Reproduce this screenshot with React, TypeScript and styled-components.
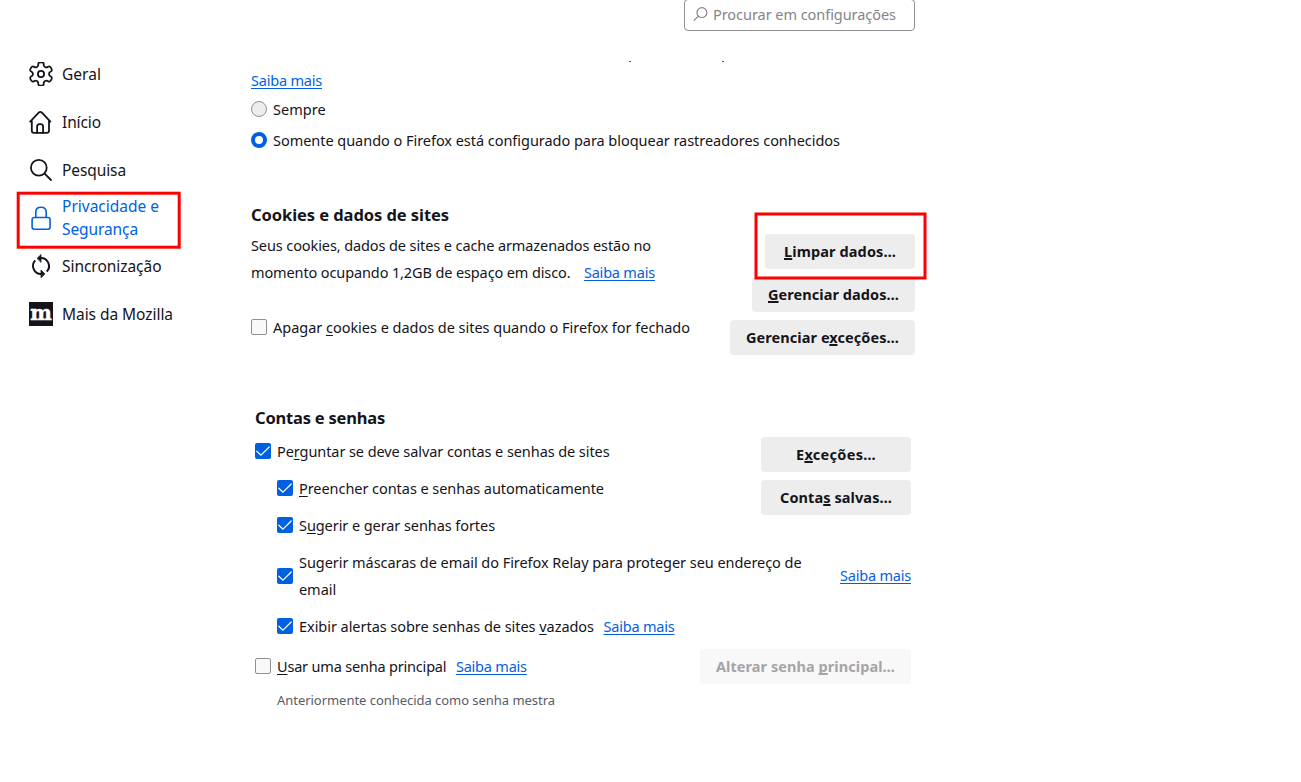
import React from "react";
import styled, { createGlobalStyle } from "styled-components";

const ink = "#15141a";
const blue = "#0061e0";

const GlobalStyle = createGlobalStyle`
  *, *::before, *::after { box-sizing: border-box; }
  body {
    margin: 0;
    background: #fff;
    color: ${ink};
    font-family: "Noto Sans", "Liberation Sans", sans-serif;
    font-size: 14.5px;
    overflow: hidden;
  }
`;

const Page = styled.div`
  display: flex;
  height: 782px;
  overflow: hidden;
`;

const Sidebar = styled.nav`
  width: 251px;
  flex: none;
  padding: 50px 66px 0 29px;
`;

const NavItem = styled.a<{ $active?: boolean }>`
  position: relative;
  display: flex;
  align-items: center;
  gap: 9px;
  height: 48px;
  font-size: 15.5px;
  line-height: 23px;
  color: ${(p) => (p.$active ? blue : ink)};
  white-space: nowrap;

  > svg:first-child { flex: none; }
`;

const Tracked = styled.span<{ $track: number }>`
  letter-spacing: ${(p) => p.$track}px;
`;

const Callout = styled.svg<{ $left: number; $top: number }>`
  position: absolute;
  z-index: 2;
  left: ${(p) => p.$left}px;
  top: ${(p) => p.$top}px;
  pointer-events: none;
`;

const Main = styled.main`
  width: 664px;
  display: flex;
  flex-direction: column;
`;

const SearchBox = styled.div`
  align-self: flex-end;
  display: flex;
  align-items: center;
  gap: 5px;
  width: 231px;
  height: 32px;
  margin-top: -1px;
  padding: 0 0 2px 8px;
  border: 1px solid #8f8f94;
  border-radius: 4px;
  color: #84848a;
  letter-spacing: -0.051px;
`;

const ClippedLine = styled.div`
  display: flex;
  gap: 91px;
  height: 6px;
  margin-top: 30px;
  padding-left: 378px;
`;

const Descender = styled.i`
  width: 2px;
  height: 1px;
  background: #55545a;
`;

const Link = styled.a<{ $gap?: number }>`
  margin-left: ${(p) => p.$gap ?? 0}px;
  color: ${blue};
  letter-spacing: -0.205px;
  text-decoration: underline;
  text-decoration-thickness: 1px;
  text-underline-offset: 2px;
  white-space: nowrap;
`;

const Key = styled.u`
  text-decoration-thickness: 1px;
  text-underline-offset: 2px;
  text-decoration-skip-ink: none;
`;

const Row = styled.div<{ $indent?: number; $gap?: number; $height?: number }>`
  display: flex;
  align-items: center;
  min-height: ${(p) => p.$height ?? 27}px;
  margin-left: ${(p) => p.$indent ?? 0}px;
  margin-bottom: ${(p) => p.$gap ?? 0}px;
  line-height: 27px;
  white-space: nowrap;
`;

const Radio = styled.span<{ $on?: boolean }>`
  flex: none;
  width: 16px;
  height: 16px;
  margin: 0 6px 2px 0;
  border-radius: 50%;
  border: ${(p) => (p.$on ? `4px solid ${blue}` : "1px solid #8f8f94")};
  background: ${(p) => (p.$on ? "#fff" : "#ededed")};
`;

const Box = styled.span<{ $on?: boolean }>`
  flex: none;
  display: flex;
  width: 16px;
  height: 16px;
  margin: 0 6px 1px 0;
  border-radius: 2px;
  border: ${(p) => (p.$on ? "0" : "1px solid #8f8f94")};
  background: ${(p) => (p.$on ? blue : "#f9f9fa")};
`;

const Heading = styled.h2<{ $track: number }>`
  margin: 0;
  font-size: 16.5px;
  font-weight: 700;
  line-height: 27px;
  letter-spacing: ${(p) => p.$track}px;
`;

const CookieSection = styled.section`
  display: flex;
  justify-content: space-between;
  margin-top: 45px;
`;

const Paragraph = styled.p`
  margin: 4px 0 28px;
  line-height: 27px;
  white-space: nowrap;
`;

const Buttons = styled.div<{ $top: number }>`
  display: flex;
  flex-direction: column;
  align-items: flex-end;
  gap: 8px;
  margin-top: ${(p) => p.$top}px;
`;

const Button = styled.div<{ $width: number; $track: number; $disabled?: boolean }>`
  position: relative;
  display: flex;
  align-items: center;
  justify-content: center;
  width: ${(p) => p.$width}px;
  height: 35px;
  padding-bottom: 1px;
  border-radius: 4px;
  background: ${(p) => (p.$disabled ? "#f8f8f8" : "#ededed")};
  color: ${(p) => (p.$disabled ? "#a5a5a8" : ink)};
  font-weight: 700;
  line-height: 20px;
  letter-spacing: ${(p) => p.$track}px;
  white-space: nowrap;

  ${Key} {
    text-decoration-thickness: 2px;
    text-underline-offset: 1px;
  }
`;

const PasswordSection = styled.section`
  margin: 49px 4px 0;
`;

const Split = styled.div`
  display: flex;
  justify-content: space-between;
`;

const Options = styled.div`
  padding-top: 7px;
`;

const Spread = styled(Row)`
  justify-content: space-between;
`;

const SideLink = styled(Link)`
  padding-bottom: 2px;
`;

const Group = styled.span`
  display: flex;
  align-items: center;
`;

const Note = styled.div`
  margin: 3px 0 0 22px;
  color: #5b5b66;
  font-size: 13px;
  line-height: 27px;
  letter-spacing: -0.04px;
`;

/* Six-toothed outline: each vertex is a control point, each edge midpoint an anchor. */
const gearPath = (() => {
  const pts: [number, number][] = [];
  for (let i = 0; i < 6; i++) {
    const base = -90 + i * 60;
    for (const [r, a] of [[8.2, -18], [12.1, -14], [12.1, 14], [8.2, 18]]) {
      const t = ((base + a) * Math.PI) / 180;
      pts.push([12 + r * Math.cos(t), 12 + r * Math.sin(t)]);
    }
  }
  const mid = (i: number) => {
    const a = pts[i % pts.length];
    const b = pts[(i + 1) % pts.length];
    return `${((a[0] + b[0]) / 2).toFixed(2)} ${((a[1] + b[1]) / 2).toFixed(2)}`;
  };
  let d = `M${mid(pts.length - 1)}`;
  pts.forEach((p, i) => {
    d += `Q${p[0].toFixed(2)} ${p[1].toFixed(2)} ${mid(i)}`;
  });
  return d + "Z";
})();

const Icon = ({ children, weight = 1.8 }: { children: React.ReactNode; weight?: number }) => (
  <svg width="24" height="24" viewBox="0 0 24 24" fill="none" stroke="currentColor" strokeWidth={weight} strokeLinecap="round" strokeLinejoin="round">
    {children}
  </svg>
);

const Check = ({ on }: { on?: boolean }) => (
  <Box $on={on}>
    {on && (
      <svg width="16" height="16" viewBox="0 0 16 16" fill="none" stroke="#fff" strokeWidth="1.2" strokeLinecap="round" strokeLinejoin="round">
        <path d="M1.8 8.2 6 12.2 14.2 4" />
      </svg>
    )}
  </Box>
);

export default function App() {
  return (
    <>
      <GlobalStyle />
      <Page>
        <Sidebar>
          <NavItem>
            <Icon>
              <path d={gearPath} />
              <circle cx="12" cy="12" r="3.1" />
            </Icon>
            <Tracked $track={0.037}>Geral</Tracked>
          </NavItem>
          <NavItem>
            <Icon>
              <path d="M1.2 11.6 9.7 2.6Q11.3 1.1 12.9 2.6L21.4 11.6M2.8 10.2V20.5Q2.8 22.9 5.1 22.9H17.7Q20 22.9 20 20.5V10.2" />
              <path d="M8.1 22.8V17Q8.1 14.2 10.5 14.2H11.8Q14.1 14.2 14.1 17V22.8" />
            </Icon>
            <Tracked $track={-0.109}>Início</Tracked>
          </NavItem>
          <NavItem>
            <Icon>
              <circle cx="9.8" cy="9.8" r="7.9" />
              <path d="M15.6 15.6 22 22" />
            </Icon>
            <Tracked $track={-0.098}>Pesquisa</Tracked>
          </NavItem>
          <NavItem $active>
            <Icon weight={1.6}>
              <rect x="3.1" y="11.5" width="18" height="11.7" rx="2.2" />
              <path d="M6.8 11.3V6.2Q6.8 1.2 12 1.2T17.2 6.2V11.3" />
            </Icon>
            <span>
              <Tracked $track={0}>Privacidade e</Tracked>
              <br />
              <Tracked $track={-0.097}>Segurança</Tracked>
            </span>
            <Callout $left={-13} $top={-3} width="166" height="60">
              <rect x="2.2" y="2.2" width="161" height="54" fill="none" stroke="#f00" strokeWidth="3" />
            </Callout>
          </NavItem>
          <NavItem>
            <Icon weight={2}>
              <path d="M11.5 4A8.1 8.1 0 0 1 17.8 17.6M12.5 20A8.1 8.1 0 0 1 6.2 6.4" strokeLinecap="butt" />
              <path d="M8.3 4.2 12 .6V8ZM15.7 19.8 12 16V23.4Z" fill="currentColor" strokeWidth=".8" />
            </Icon>
            <Tracked $track={-0.044}>Sincronização</Tracked>
          </NavItem>
          <NavItem>
            <svg width="24" height="24" viewBox="0 0 24 24">
              <rect width="24" height="24" fill={ink} />
              <text x="1.2" y="18.2" fill="#fff" stroke="#fff" strokeWidth=".5" fontFamily="DejaVu Serif, serif" fontWeight="700" fontSize="19.5" textLength="21.6" lengthAdjust="spacingAndGlyphs">m</text>
            </svg>
            <Tracked $track={-0.049}>Mais da Mozilla</Tracked>
          </NavItem>
        </Sidebar>

        <Main>
          <SearchBox>
            <svg width="15" height="15" viewBox="0 0 15 15" fill="none" stroke="currentColor" strokeWidth="1.2" strokeLinecap="round">
              <circle cx="8.9" cy="5.6" r="4.9" />
              <path d="M5.3 9.2 1.2 13.4" />
            </svg>
            Procurar em configurações
          </SearchBox>
          <ClippedLine>
            <Descender />
            <Descender />
          </ClippedLine>
          <Row><Link>Saiba mais</Link></Row>
          <Row $height={31}><Radio /><Tracked $track={0.03}>Sempre</Tracked></Row>
          <Row $height={31}>
            <Radio $on />
            <Tracked $track={-0.038}>Somente quando o Firefox está configurado para bloquear rastreadores conhecidos</Tracked>
          </Row>

          <CookieSection>
            <div>
              <Heading $track={-0.069}>Cookies e dados de sites</Heading>
              <Paragraph>
                <Tracked $track={-0.1}>Seus cookies, dados de sites e cache armazenados estão no</Tracked>
                <br />
                <Tracked $track={-0.12}>momento ocupando 1,2GB de espaço em disco.</Tracked>
                <Link $gap={13.5}>Saiba mais</Link>
              </Paragraph>
              <Row>
                <Check />
                <Tracked $track={-0.026}>Apagar <Key>c</Key>ookies e dados de sites quando o Firefox for fechado</Tracked>
              </Row>
            </div>
            <Buttons $top={33}>
              <Button $width={150} $track={0.12}>
                <span><Key>L</Key>impar dados…</span>
                <Callout $left={-11} $top={-22} width="174" height="69">
                  <rect x="2" y="2" width="169" height="64" fill="none" stroke="#f00" strokeWidth="3" />
                </Callout>
              </Button>
              <Button $width={163} $track={0.066}><span><Key>G</Key>erenciar dados…</span></Button>
              <Button $width={185} $track={0.071}><span>Gerenciar e<Key>x</Key>ceções…</span></Button>
            </Buttons>
          </CookieSection>

          <PasswordSection>
            <Heading $track={-0.209}>Contas e senhas</Heading>
            <Split>
              <Options>
                <Row $gap={10}>
                  <Check on />
                  <Tracked $track={-0.079}>Pe<Key>r</Key>guntar se deve salvar contas e senhas de sites</Tracked>
                </Row>
                <Row $indent={22} $gap={10}>
                  <Check on />
                  <Tracked $track={-0.055}><Key>P</Key>reencher contas e senhas automaticamente</Tracked>
                </Row>
                <Row $indent={22} $gap={10}>
                  <Check on />
                  <Tracked $track={-0.074}>S<Key>u</Key>gerir e gerar senhas fortes</Tracked>
                </Row>
              </Options>
              <Buttons $top={6}>
                <Button $width={150} $track={0.307}><span>E<Key>x</Key>ceções…</span></Button>
                <Button $width={150} $track={0.088}><span>Conta<Key>s</Key> salvas…</span></Button>
              </Buttons>
            </Split>
            <Spread $indent={22} $gap={10}>
              <Group>
                <Check on />
                <Tracked $track={-0.054}>
                  Sugerir máscaras de email do Firefox Relay para proteger seu endereço de
                  <br />
                  email
                </Tracked>
              </Group>
              <SideLink>Saiba mais</SideLink>
            </Spread>
            <Row $indent={22} $gap={9}>
              <Check on />
              <Tracked $track={-0.045}>Exibir alertas sobre senhas de sites <Key>v</Key>azados</Tracked>
              <Link $gap={9.5}>Saiba mais</Link>
            </Row>
            <Spread $height={35}>
              <Group>
                <Check />
                <Tracked $track={-0.19}><Key>U</Key>sar uma senha principal</Tracked>
                <Link $gap={9.5}>Saiba mais</Link>
              </Group>
              <Button $width={211} $track={0.064} $disabled><span>Alterar senha <Key>p</Key>rincipal…</span></Button>
            </Spread>
            <Note>Anteriormente conhecida como senha mestra</Note>
          </PasswordSection>
        </Main>
      </Page>
    </>
  );
}
